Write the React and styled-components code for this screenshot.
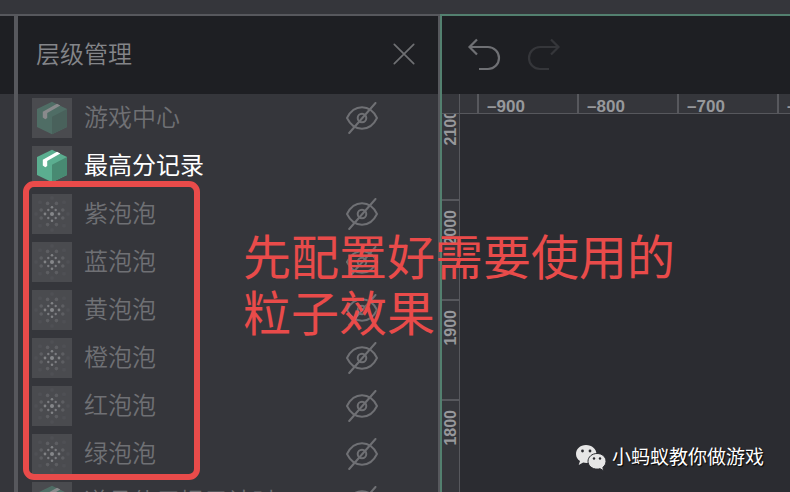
import React from 'react';
import styled, { createGlobalStyle } from 'styled-components';

const GlobalStyle = createGlobalStyle`
  * {
    box-sizing: border-box;
  }
  html, body, #root {
    height: 100%;
  }
  body {
    margin: 0;
    overflow: hidden;
    background: #35363b;
    color: #848589;
    font-family: "Liberation Sans", "Noto Sans CJK SC", sans-serif;
  }
  button {
    padding: 0;
    border: 0;
    background: none;
    color: inherit;
    font: inherit;
    cursor: pointer;
  }
  svg {
    display: block;
  }
`;

const Page = styled.div`
  position: relative;
  height: 100vh;
  padding-top: 14px;
  display: flex;
  overflow: hidden;
`;

const SideStrip = styled.div`
  width: 14px;
  flex: none;
  border-top: 2px solid #57585d;
`;

const StripHeader = styled.div`
  height: 78px;
  background: #1e1f23;
`;

const Panel = styled.section`
  width: 426px;
  flex: none;
  display: flex;
  flex-direction: column;
  border: solid #57585d;
  border-width: 2px 2px 0 4px;
`;

const PanelHeader = styled.header`
  height: 78px;
  flex: none;
  padding: 0 18px;
  display: flex;
  align-items: center;
  justify-content: space-between;
  background: #1e1f23;
`;

const Title = styled.h1`
  margin: 0;
  font-size: 24px;
  font-weight: 350;
  line-height: 36px;
`;

const LayerList = styled.ul`
  flex: 1;
  min-height: 0;
  margin: 0;
  padding: 4px 60px 0 14px;
  display: flex;
  flex-direction: column;
  gap: 8px;
  overflow: hidden;
  list-style: none;
`;

const LayerRow = styled.li`
  height: 40px;
  flex: none;
  display: flex;
  align-items: center;
  gap: 12px;
  color: ${({ $active }) => ($active ? '#ffffff' : '#6f7074')};
`;

const Thumb = styled.span`
  width: 40px;
  height: 40px;
  flex: none;
  background: #4a4b4f;
`;

const LayerName = styled.span`
  flex: 1;
  font-size: 24px;
  font-weight: ${({ $active }) => ($active ? 400 : 350)};
  line-height: 36px;
  white-space: nowrap;
`;

const Workspace = styled.main`
  flex: 1;
  min-width: 0;
  display: flex;
  flex-direction: column;
  border: solid #53806f;
  border-width: 2px 0 0 2px;
`;

const Toolbar = styled.div`
  height: 78px;
  flex: none;
  padding: 0 24px;
  display: flex;
  align-items: center;
  gap: 24px;
  background: #1e1f23;
`;

const ToolButton = styled.button`
  color: #6f7074;

  &:disabled {
    color: #35363a;
    cursor: default;
  }
`;

const TopRuler = styled.div`
  height: 20px;
  flex: none;
  display: flex;
  overflow: hidden;
  border-bottom: 1px solid #57585d;
`;

const Corner = styled.div`
  width: 18px;
  flex: none;
  border-right: 1px solid #57585d;
`;

const TopTicks = styled.div`
  padding-left: 17px;
  display: flex;
`;

const TopTick = styled.span`
  width: 100px;
  flex: none;
  padding: 4px 0 0 8px;
  border-left: 2px solid #57585d;
  color: #97989b;
  font-size: 17px;
  font-weight: 700;
  line-height: 18px;
`;

const Stage = styled.div`
  flex: 1;
  min-height: 0;
  display: flex;
`;

const SideRuler = styled.div`
  width: 18px;
  flex: none;
  overflow: hidden;
  border-right: 1px solid #57585d;
`;

const SideTick = styled.span`
  height: ${({ $first }) => ($first ? 87 : 100)}px;
  padding-bottom: 53px;
  display: flex;
  align-items: flex-end;
  justify-content: center;
  border-bottom: 2px solid #57585d;
  color: #97989b;
  font-size: 16px;
  font-weight: 700;
  line-height: 17px;

  span {
    writing-mode: vertical-rl;
    transform: rotate(180deg);
  }
`;

const Canvas = styled.div`
  flex: 1;
  background: #2b2c31;
`;

const Highlight = styled.div`
  position: absolute;
  top: 181px;
  left: 23px;
  width: 177px;
  height: 299px;
  border: 6px solid #e94b4a;
  border-radius: 11px;
`;

const Note = styled.p`
  position: absolute;
  top: 231px;
  left: 243px;
  margin: 0;
  color: #e94b4a;
  font-size: 48px;
  font-weight: 400;
  line-height: 56px;
  white-space: nowrap;
`;

const Watermark = styled.div`
  position: absolute;
  right: 26px;
  bottom: 20px;
  display: flex;
  align-items: center;
  gap: 5px;
  color: #ffffff;
  font-size: 19px;
  line-height: 28px;
  text-shadow: 1px 1px 1px #000000;
`;

function CubeIcon({ dim }) {
  return (
    <svg width="40" height="40" viewBox="0 0 40 40" opacity={dim ? 0.35 : 1} aria-hidden="true">
      <path d="M20 3.800 35 11v18L20 36.200 5 29V11Z" fill="#5bae90" />
      <path d="M20 18.700 35 11v18L20 36.200Z" fill="#488a72" />
      <path d="M25 5.800 28.300 7.600 15.200 15V20L13.300 21.200 10.800 19.500V13.800Z" fill="#ffffff" />
    </svg>
  );
}

// offsets from the middle, radius and opacity of one dot per quadrant
const dots = [
  [0, 0, 2, 0.55],
  [0, 6.700, 1.300, 0.5],
  [7, 0, 1.400, 0.5],
  [3.700, 4, 1.200, 0.45],
  [4.400, 10.600, 1.800, 0.18],
  [10.800, 4, 1.800, 0.18],
  [12, 11.700, 2, 0.05],
  [0, 16, 2, 0.05],
  [16, 0, 2, 0.05],
];

function ParticleIcon() {
  return (
    <svg width="40" height="40" viewBox="-20 -20 40 40" fill="#b8b9bc" aria-hidden="true">
      {dots.map(([x, y, r, opacity]) => {
        const xs = x ? [x, -x] : [0];
        const ys = y ? [y, -y] : [0];
        return xs.map((cx) =>
          ys.map((cy) => <circle key={`${cx},${cy}`} cx={cx} cy={cy} r={r} opacity={opacity} />)
        );
      })}
    </svg>
  );
}

function HiddenIcon() {
  return (
    <svg width="32" height="32" viewBox="0 0 32 32" fill="none" stroke="#6f7074" strokeWidth="2" strokeLinecap="round" strokeLinejoin="round" aria-hidden="true">
      <path d="M1 16C8 1.700 24 1.700 31 16C24 30.300 8 30.300 1 16Z" />
      <circle cx="16" cy="16" r="4.300" />
      <path d="M3.200 31 29.500 1" />
    </svg>
  );
}

function CloseIcon() {
  return (
    <svg width="32" height="32" viewBox="0 0 32 32" stroke="#6f7073" strokeWidth="1.700" strokeLinecap="round" aria-hidden="true">
      <path d="M6.300 5.300 25.700 24.700M25.700 5.300 6.300 24.700" />
    </svg>
  );
}

function UndoIcon({ flip }) {
  return (
    <svg width="36" height="36" viewBox="0 0 36 36" fill="none" stroke="currentColor" strokeWidth="2.200" aria-hidden="true">
      <path
        d="M11 2.500 3.500 10 11 17.500M3.500 10H22A11 11 0 0 1 22 32H13"
        transform={flip ? 'translate(36 0) scale(-1 1)' : undefined}
      />
    </svg>
  );
}

function ChatLogo() {
  return (
    <svg width="32" height="28" viewBox="0 0 32 28" aria-hidden="true">
      <path d="M11 1C5 1 1 5 1 10c0 3 1.500 5.500 4 7l-1.300 4 4.500-2.500c1 .3 2 .4 3.300.4 5.500-.2 10-4.200 10-9S17 1 11 1Z" fill="#e6e6e6" />
      <path d="M22 9.500c5.200 0 9 3.400 9 7.800 0 2.500-1.200 4.600-3.200 6.100l1 3.400-3.800-2.100c-1 .3-2 .4-3 .4-5 0-9-3.500-9-7.800s4-7.800 9-7.800Z" fill="#e6e6e6" stroke="#2b2c31" strokeWidth="1" />
      <g fill="#2b2c31">
        <circle cx="7.500" cy="7" r="1.400" />
        <circle cx="15" cy="7" r="1.400" />
        <circle cx="19" cy="14.500" r="1.200" />
        <circle cx="25" cy="14.500" r="1.200" />
      </g>
    </svg>
  );
}

const layers = [
  { name: '游戏中心', kind: 'group', hidden: true },
  { name: '最高分记录', kind: 'group', active: true },
  { name: '紫泡泡', hidden: true },
  { name: '蓝泡泡', hidden: true },
  { name: '黄泡泡', hidden: true },
  { name: '橙泡泡', hidden: true },
  { name: '红泡泡', hidden: true },
  { name: '绿泡泡', hidden: true },
  { name: '道具使用提示计时', kind: 'group', hidden: true },
];

export default function App() {
  return (
    <Page>
      <GlobalStyle />
      <SideStrip>
        <StripHeader />
      </SideStrip>
      <Panel>
        <PanelHeader>
          <Title>层级管理</Title>
          <button type="button" aria-label="关闭"><CloseIcon /></button>
        </PanelHeader>
        <LayerList>
          {layers.map(({ name, kind, hidden, active }) => (
            <LayerRow key={name} $active={active}>
              <Thumb>{kind === 'group' ? <CubeIcon dim={!active} /> : <ParticleIcon />}</Thumb>
              <LayerName $active={active}>{name}</LayerName>
              {hidden && <button type="button" aria-label="显示"><HiddenIcon /></button>}
            </LayerRow>
          ))}
        </LayerList>
      </Panel>
      <Workspace>
        <Toolbar>
          <ToolButton type="button" aria-label="撤销"><UndoIcon /></ToolButton>
          <ToolButton type="button" aria-label="重做" disabled><UndoIcon flip /></ToolButton>
        </Toolbar>
        <TopRuler>
          <Corner />
          <TopTicks>
            {[900, 800, 700, 600].map((n) => <TopTick key={n}>–{n}</TopTick>)}
          </TopTicks>
        </TopRuler>
        <Stage>
          <SideRuler>
            {[2100, 2000, 1900, 1800].map((n, i) => (
              <SideTick key={n} $first={i === 0}><span>{n}</span></SideTick>
            ))}
          </SideRuler>
          <Canvas />
        </Stage>
      </Workspace>
      <Highlight />
      <Note>先配置好需要使用的<br />粒子效果</Note>
      <Watermark><ChatLogo />小蚂蚁教你做游戏</Watermark>
    </Page>
  );
}
